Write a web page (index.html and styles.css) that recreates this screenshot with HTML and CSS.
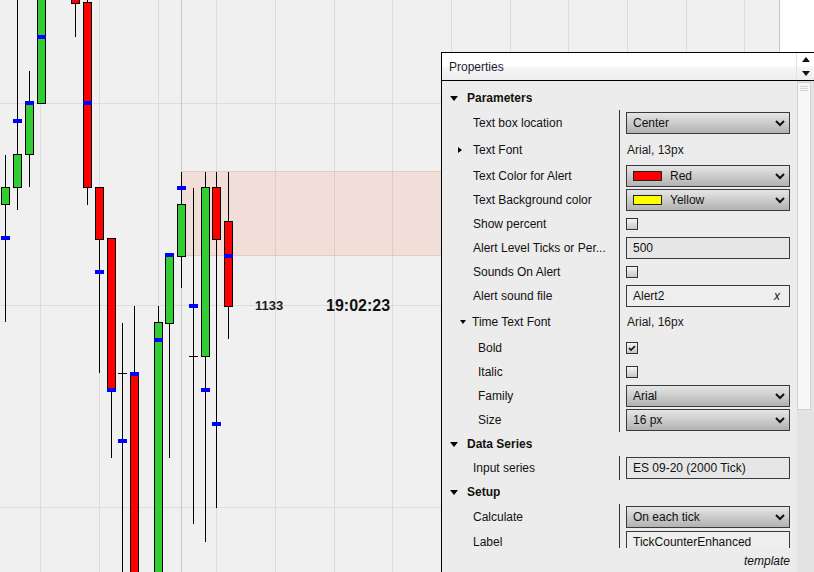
FILE: index.html
```html
<!DOCTYPE html>
<html lang="en">
<head>
    <meta charset="UTF-8">
    <title>Chart - Properties</title>
    <link rel="stylesheet" href="styles.css">
</head>
<body>
    <div class="screen">
        <div class="chart">
            <svg id="plot" width="780" height="572" viewBox="0 0 780 572">
                <g id="grid"></g>
                <rect class="zone" x="181" y="171" width="260" height="85"></rect>
                <rect class="zone-edge" x="181" y="171" width="260" height="1"></rect>
                <rect class="zone-edge" x="181" y="255" width="260" height="1"></rect>
                <g id="bars"></g>
                <text class="count" x="255" y="310">1133</text>
                <text class="clock" x="326" y="311">19:02:23</text>
            </svg>
        </div>
        <div class="axis"></div>

        <div class="props">
            <div class="props-head">
                <span class="props-title">Properties</span>
                <div class="spin">
                    <span class="arrow-up"></span>
                    <span class="arrow-down"></span>
                </div>
            </div>
            <div class="props-main">
                <div class="sheet">
                    <div class="rows">
                        <div class="row group">
                            <div class="name"><span class="tri-down"></span>Parameters</div>
                        </div>
                        <div class="row h26">
                            <div class="name">Text box location</div>
                            <div class="val">
                                <div class="select"><span class="txt">Center</span><svg class="chev" width="10" height="7"><polyline points="1,1 5,5 9,1"></polyline></svg></div>
                            </div>
                        </div>
                        <div class="row h28">
                            <div class="name sub"><span class="tri-right"></span>Text Font</div>
                            <div class="val"><span class="plain">Arial, 13px</span></div>
                        </div>
                        <div class="row">
                            <div class="name">Text Color for Alert</div>
                            <div class="val">
                                <div class="select"><span class="swatch red"></span><span class="txt">Red</span><svg class="chev" width="10" height="7"><polyline points="1,1 5,5 9,1"></polyline></svg></div>
                            </div>
                        </div>
                        <div class="row">
                            <div class="name">Text Background color</div>
                            <div class="val">
                                <div class="select"><span class="swatch yellow"></span><span class="txt">Yellow</span><svg class="chev" width="10" height="7"><polyline points="1,1 5,5 9,1"></polyline></svg></div>
                            </div>
                        </div>
                        <div class="row">
                            <div class="name">Show percent</div>
                            <div class="val"><span class="check"></span></div>
                        </div>
                        <div class="row">
                            <div class="name">Alert Level Ticks or Per...</div>
                            <div class="val"><div class="field">500</div></div>
                        </div>
                        <div class="row">
                            <div class="name">Sounds On Alert</div>
                            <div class="val"><span class="check"></span></div>
                        </div>
                        <div class="row">
                            <div class="name">Alert sound file</div>
                            <div class="val"><div class="field light"><span class="txt">Alert2</span><span class="clear">x</span></div></div>
                        </div>
                        <div class="row h28">
                            <div class="name sub2"><span class="tri-small"></span>Time Text Font</div>
                            <div class="val"><span class="plain">Arial, 16px</span></div>
                        </div>
                        <div class="row">
                            <div class="name deep">Bold</div>
                            <div class="val"><span class="check on"><svg width="8" height="7"><polyline points="1,3 3,5 7,1"></polyline></svg></span></div>
                        </div>
                        <div class="row">
                            <div class="name deep">Italic</div>
                            <div class="val"><span class="check"></span></div>
                        </div>
                        <div class="row">
                            <div class="name deep">Family</div>
                            <div class="val">
                                <div class="select"><span class="txt">Arial</span><svg class="chev" width="10" height="7"><polyline points="1,1 5,5 9,1"></polyline></svg></div>
                            </div>
                        </div>
                        <div class="row">
                            <div class="name deep">Size</div>
                            <div class="val">
                                <div class="select"><span class="txt">16 px</span><svg class="chev" width="10" height="7"><polyline points="1,1 5,5 9,1"></polyline></svg></div>
                            </div>
                        </div>
                        <div class="row group">
                            <div class="name"><span class="tri-down"></span>Data Series</div>
                        </div>
                        <div class="row">
                            <div class="name">Input series</div>
                            <div class="val"><div class="field">ES 09-20 (2000 Tick)</div></div>
                        </div>
                        <div class="row group">
                            <div class="name"><span class="tri-down"></span>Setup</div>
                        </div>
                        <div class="row h26">
                            <div class="name">Calculate</div>
                            <div class="val">
                                <div class="select"><span class="txt">On each tick</span><svg class="chev" width="10" height="7"><polyline points="1,1 5,5 9,1"></polyline></svg></div>
                            </div>
                        </div>
                        <div class="row">
                            <div class="name">Label</div>
                            <div class="val"><div class="field light">TickCounterEnhanced</div></div>
                        </div>
                    </div>
                    <div class="foot">template</div>
                </div>
                <div class="scroll">
                    <div class="thumb"><span></span><span></span><span></span></div>
                </div>
            </div>
        </div>
    </div>

    <script>
        const NS = 'http://www.w3.org/2000/svg';
        const grid = document.getElementById('grid');
        const bars = document.getElementById('bars');

        function rect(parent, x, y, w, h, cls) {
            const r = document.createElementNS(NS, 'rect');
            r.setAttribute('x', x);
            r.setAttribute('y', y);
            r.setAttribute('width', w);
            r.setAttribute('height', h);
            r.setAttribute('class', cls);
            parent.appendChild(r);
        }

        // grid lines
        [40, 99, 158, 216, 275, 334, 392, 451, 510, 568, 627, 686, 744].forEach(x => rect(grid, x, 0, 1, 572, 'grid'));
        [103, 305, 507].forEach(y => rect(grid, 0, y, 780, 1, 'grid'));
        rect(grid, 181, 0, 1, 572, 'grid dark');
        rect(grid, 779, 0, 1, 572, 'grid dark');

        // x, high, low, body top, body bottom, kind, marker
        const candles = [
            [5, 155, 322, 187, 204, 'up', 238],
            [17, -10, 210, 154, 187, 'up', 121],
            [29, 71, 187, 103, 154, 'up', 103],
            [41, -10, 103, -10, 103, 'up', 37],
            [75, -10, 37, -10, 3, 'down', null],
            [87, -10, 205, 2, 187, 'down', 103],
            [99, 187, 373, 187, 239, 'down', 272],
            [111, 238, 458, 238, 390, 'down', 390],
            [122, 323, 600, 373, 373, 'doji', 441],
            [134, 306, 600, 374, 600, 'down', 374],
            [158, 306, 600, 322, 600, 'up', 340],
            [169, 255, 458, 255, 323, 'up', 255],
            [181, 172, 288, 204, 256, 'up', 188],
            [193, 188, 524, 356, 356, 'doji', 306],
            [205, 172, 542, 187, 356, 'up', 390],
            [216, 172, 508, 187, 239, 'down', 424],
            [228, 172, 339, 221, 306, 'down', 256]
        ];

        candles.forEach(([x, high, low, top, bottom, kind, marker]) => {
            rect(bars, x, high, 1, low - high, 'wick');
            if (kind === 'doji') {
                rect(bars, x - 4, top, 9, 1, 'wick');
            } else {
                rect(bars, x - 4, top, 9, bottom - top + 1, 'body');
                rect(bars, x - 3, top + 1, 7, bottom - top - 1, kind);
            }
            if (marker !== null) rect(bars, x - 4, marker - 2, 9, 4, 'mark');
        });
    </script>
</body>
</html>
```

FILE: styles.css
```css
body {
    margin: 0;
    font-family: "Liberation Sans", Arial, sans-serif;
    font-size: 12px;
    color: #111;
}
.screen {
    position: relative;
    width: 814px;
    height: 572px;
    overflow: hidden;
    display: flex;
    background: #fff;
}
.chart {
    width: 780px;
    height: 572px;
    background: #f0f0f0;
}
.chart svg {
    display: block;
    shape-rendering: crispEdges;
}
.axis {
    flex: 1;
    background: #fff;
}
.grid {
    fill: #dcdcdc;
}
.grid.dark {
    fill: #c8c8c8;
}
.zone {
    fill: rgba(250, 110, 80, 0.14);
}
.zone-edge {
    fill: rgba(230, 110, 90, 0.2);
}
.wick,
.body {
    fill: #000;
}
.up {
    fill: #32cd32;
}
.down {
    fill: #ff0000;
}
.mark {
    fill: #0000ff;
}
.count {
    font: bold 13px "Liberation Sans", Arial, sans-serif;
    fill: #1e1e1e;
}
.clock {
    font: bold 16px "Liberation Sans", Arial, sans-serif;
    fill: #111;
}

/* properties panel */
.props {
    position: absolute;
    left: 441px;
    top: 52px;
    right: 0;
    bottom: 0;
    border-left: 1px solid #000;
    border-top: 1px solid #000;
    background: #ececec;
    display: flex;
    flex-direction: column;
}
.props-head {
    height: 27px;
    border-bottom: 1px solid #000;
    display: flex;
    background: linear-gradient(#fff 0, #fff 48%, #f6f6f6 52%, #ededed 100%);
}
.props-title {
    flex: 1;
    padding-left: 7px;
    line-height: 28px;
    color: #1c1c30;
}
.spin {
    width: 17px;
    border-left: 1px solid #e2e2e2;
    display: flex;
    flex-direction: column;
    align-items: center;
    justify-content: space-around;
}
.arrow-up {
    border-left: 4px solid transparent;
    border-right: 4px solid transparent;
    border-bottom: 5px solid #111;
}
.arrow-down {
    border-left: 4px solid transparent;
    border-right: 4px solid transparent;
    border-top: 5px solid #111;
}
.props-main {
    flex: 1;
    display: flex;
    min-height: 0;
}
.sheet {
    flex: 1;
    display: flex;
    flex-direction: column;
}
.rows {
    height: 467px;
    box-sizing: border-box;
    padding-top: 5px;
    overflow: hidden;
}
.row {
    display: flex;
    align-items: center;
    height: 24px;
}
.row.h26 {
    height: 26px;
}
.row.h28 {
    height: 28px;
}
.name {
    width: 178px;
    box-sizing: border-box;
    align-self: stretch;
    display: flex;
    align-items: center;
    padding-left: 31px;
    border-right: 1px solid #333;
    white-space: nowrap;
    overflow: hidden;
}
.name.sub {
    padding-left: 16px;
}
.name.sub2 {
    padding-left: 18px;
}
.name.deep {
    padding-left: 36px;
}
.group .name {
    width: auto;
    border-right: none;
    padding-left: 8px;
    font-weight: bold;
}
.tri-down {
    border-left: 4px solid transparent;
    border-right: 4px solid transparent;
    border-top: 5px solid #000;
    margin-right: 9px;
}
.tri-right {
    border-top: 3.5px solid transparent;
    border-bottom: 3.5px solid transparent;
    border-left: 4px solid #000;
    margin-right: 11px;
}
.tri-small {
    border-left: 3.5px solid transparent;
    border-right: 3.5px solid transparent;
    border-top: 4px solid #000;
    margin-right: 6px;
}
.val {
    flex: 1;
    padding-left: 6px;
    display: flex;
    align-items: center;
}
.plain {
    padding-left: 1px;
    color: #1a1a1a;
}
.select,
.field {
    width: 164px;
    height: 22px;
    box-sizing: border-box;
    border: 1px solid #3a3a3a;
    display: flex;
    align-items: center;
    padding: 0 4px 0 6px;
    white-space: nowrap;
    overflow: hidden;
}
.select {
    background: linear-gradient(#e6e6e6, #b2b2b2);
}
.field {
    background: #e6e6e6;
}
.field.light {
    background: #eeeeee;
}
.txt {
    flex: 1;
}
.clear {
    font-style: italic;
    padding-right: 5px;
}
.chev {
    display: block;
}
.chev polyline {
    fill: none;
    stroke: #111;
    stroke-width: 2;
}
.swatch {
    width: 29px;
    height: 10px;
    box-sizing: border-box;
    border: 1px solid #222;
    margin-right: 8px;
}
.swatch.red {
    background: #ff0000;
}
.swatch.yellow {
    background: #ffff00;
}
.check {
    width: 12px;
    height: 12px;
    box-sizing: border-box;
    border: 1px solid #333;
    background: linear-gradient(#f6f6f6, #c6c6c6);
    display: flex;
    align-items: center;
    justify-content: center;
}
.check polyline {
    fill: none;
    stroke: #111;
    stroke-width: 1.6;
}
.foot {
    flex: 1;
    padding: 6px 7px 0 0;
    line-height: 14px;
    text-align: right;
    font-style: italic;
}
.scroll {
    width: 17px;
    background: #e3e3e3;
}
.thumb {
    margin-top: 1px;
    width: 14px;
    height: 328px;
    box-sizing: border-box;
    border: 1px solid #d0d0d0;
    background: #f7f7f7;
    padding-top: 2px;
}
.thumb span {
    display: block;
    height: 1px;
    margin: 1px 2px 1px;
    background: #d6d6d6;
}
```
